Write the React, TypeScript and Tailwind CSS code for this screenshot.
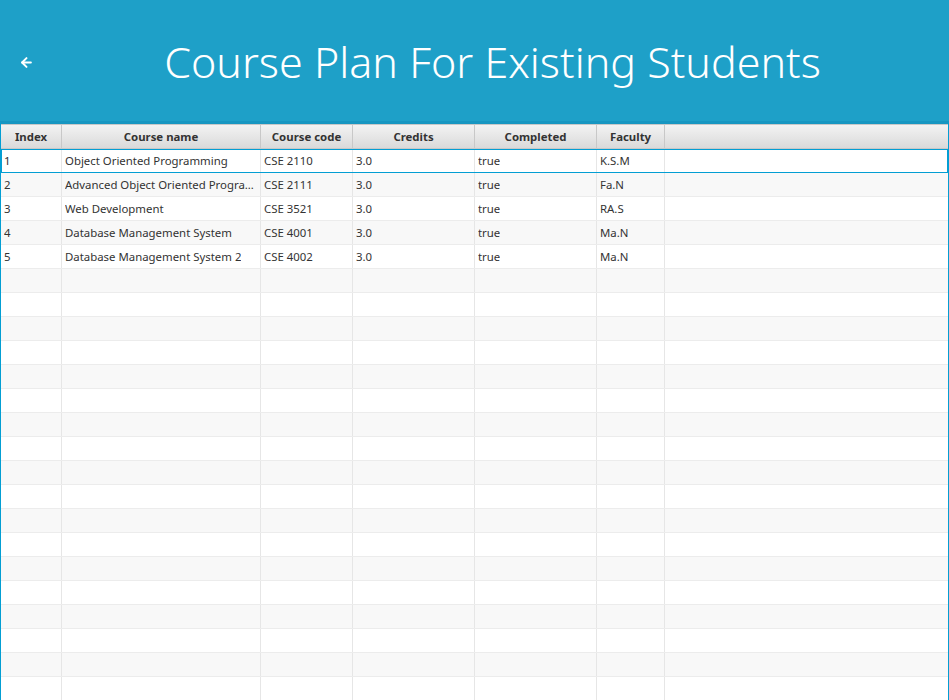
import React from 'react';
import { ArrowLeft } from 'lucide-react';

const courses = [
  { index: '1', name: 'Object Oriented Programming', code: 'CSE 2110', credits: '3.0', completed: 'true', faculty: 'K.S.M' },
  { index: '2', name: 'Advanced Object Oriented Programming', code: 'CSE 2111', credits: '3.0', completed: 'true', faculty: 'Fa.N' },
  { index: '3', name: 'Web Development', code: 'CSE 3521', credits: '3.0', completed: 'true', faculty: 'RA.S' },
  { index: '4', name: 'Database Management System', code: 'CSE 4001', credits: '3.0', completed: 'true', faculty: 'Ma.N' },
  { index: '5', name: 'Database Management System 2', code: 'CSE 4002', credits: '3.0', completed: 'true', faculty: 'Ma.N' },
];

const headers = ['Index', 'Course name', 'Course code', 'Credits', 'Completed', 'Faculty', ''];

const cols = 'grid grid-cols-[61px_199px_92px_122px_122px_68px_1fr]';

const App: React.FC = () => {
  const emptyRows = Array.from({ length: 18 });

  return (
    <div className="h-screen w-full overflow-hidden bg-white flex flex-col font-['Noto_Sans','Open_Sans',sans-serif]">
      {/* Top bar */}
      <div className="h-[121px] shrink-0 bg-[#1ea0c8] flex items-center">
        <div className="w-[36px] pl-[19px] pt-[3px] flex items-center text-white">
          <ArrowLeft className="w-[15px] h-[15px]" strokeWidth={3.2} />
        </div>
        <h1 className="flex-1 text-center text-white text-[43px] font-light leading-none pt-[2px]">
          Course Plan For Existing Students
        </h1>
      </div>

      {/* Table */}
      <div className="flex-1 border-t-[3px] border-t-[#1796c1] border-x border-x-[#039ed3] text-[11.4px] text-[#333]">
        <div className={`${cols} h-[25px] border-t border-b border-[#c8c8c8] bg-gradient-to-b from-[#f3f3f3] to-[#dadada]`}>
          {headers.map((h, i) => (
            <div
              key={i}
              className={`flex items-center justify-center pt-[1px] font-bold text-[#333] ${i < 6 ? 'border-r border-[#c8c8c8]' : ''}`}
            >
              {h}
            </div>
          ))}
        </div>

        {courses.map((c, i) => (
          <div
            key={c.index}
            className={`${cols} h-[24px] border-b border-[#ececec] ${i % 2 === 0 ? 'bg-white' : 'bg-[#f8f8f8]'} ${
              i === 0 ? 'outline outline-1 -outline-offset-1 outline-[#039ed3]' : ''
            }`}
          >
            {[c.index, c.name, c.code, c.credits, c.completed, c.faculty].map((v, j) => (
              <div key={j} className="flex items-center px-[3px] border-r border-[#e6e6e6] min-w-0">
                <span className="truncate">{v}</span>
              </div>
            ))}
            <div />
          </div>
        ))}

        {emptyRows.map((_, i) => (
          <div
            key={`e-${i}`}
            className={`${cols} h-[24px] border-b border-[#ececec] ${(i + 5) % 2 === 0 ? 'bg-white' : 'bg-[#f8f8f8]'}`}
          >
            {[0, 1, 2, 3, 4, 5].map((j) => (
              <div key={j} className="border-r border-[#e6e6e6]" />
            ))}
            <div />
          </div>
        ))}
      </div>
    </div>
  );
};

export default App;
